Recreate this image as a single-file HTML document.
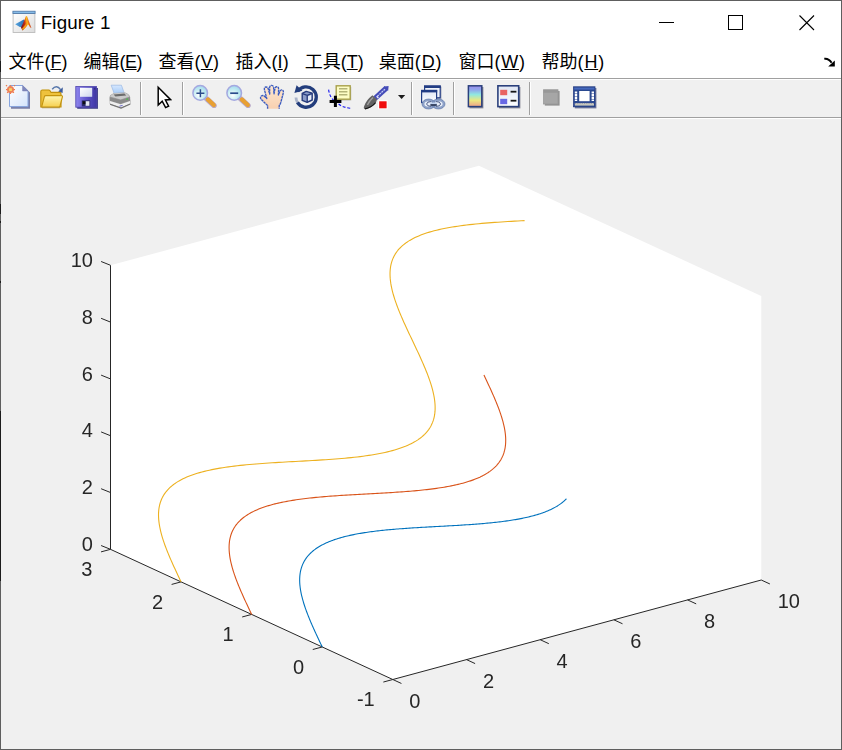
<!DOCTYPE html>
<html><head><meta charset="utf-8"><title>Figure 1</title>
<style>
html,body{margin:0;padding:0;}
body{width:842px;height:750px;overflow:hidden;background:#f0f0f0;position:relative;font-family:"Liberation Sans","Noto Sans CJK SC",sans-serif;}
#win{position:absolute;left:0;top:0;width:842px;height:750px;background:#f0f0f0;}
#bd{position:absolute;left:0;top:0;width:840px;height:748px;border:1px solid #5e5e5e;pointer-events:none;}
#title{position:absolute;left:0;top:0;width:842px;height:44px;background:#fff;}
#title .txt{position:absolute;left:40.8px;top:11.7px;font-size:18.8px;letter-spacing:0.1px;line-height:22px;color:#000;white-space:nowrap;}
#menu{position:absolute;left:0;top:44px;width:842px;height:34px;background:#fff;border-bottom:1px solid #a0a0a0;}
.mi{position:absolute;top:5.6px;font-size:18px;line-height:24px;color:#000;white-space:nowrap;}
#tb{position:absolute;left:0;top:79px;width:842px;height:37px;background:#f0f0f0;border-top:1px solid #fff;border-bottom:1px solid #a0a0a0;}
.lb{position:absolute;left:0;width:1px;background:#1c1c1c;}
#tbl{position:absolute;left:0;top:118px;width:842px;height:1px;background:#fff;}
svg{position:absolute;left:0;top:0;will-change:transform;}
</style></head><body>
<div id="win">
<div id="title"><span class="txt">Figure 1</span></div>
<div id="menu"><span class="mi" style="left:8.4px">文件<span style="letter-spacing:0.0px">(<u>F</u>)</span></span><span class="mi" style="left:83.6px">编辑<span style="letter-spacing:-0.5px">(<u>E</u>)</span></span><span class="mi" style="left:158.5px">查看<span style="letter-spacing:0.3px">(<u>V</u>)</span></span><span class="mi" style="left:235.5px">插入<span style="letter-spacing:0.1px">(<u>I</u>)</span></span><span class="mi" style="left:304.7px">工具<span style="letter-spacing:0.0px">(<u>T</u>)</span></span><span class="mi" style="left:378.8px">桌面<span style="letter-spacing:0.9px">(<u>D</u>)</span></span><span class="mi" style="left:458.5px">窗口<span style="letter-spacing:0.7px">(<u>W</u>)</span></span><span class="mi" style="left:541.6px">帮助<span style="letter-spacing:0.8px">(<u>H</u>)</span></span></div>
<div id="tb"></div><div id="tbl"></div>
</div>
<svg width="842" height="750" viewBox="0 0 842 750">
<polygon points="110.50,265.29 478.95,165.79 761.25,295.95 761.25,580.00 392.80,679.50 110.50,549.34" fill="#fff"/>
<g stroke="#262626" stroke-width="1" fill="none" stroke-linecap="butt">
<line x1="110.50" y1="549.34" x2="110.50" y2="265.29" />
<line x1="110.50" y1="549.34" x2="392.80" y2="679.50" />
<line x1="392.80" y1="679.50" x2="761.25" y2="580.00" />
<line x1="110.50" y1="549.34" x2="101.10" y2="545.54" />
<line x1="110.50" y1="492.53" x2="101.10" y2="488.73" />
<line x1="110.50" y1="435.72" x2="101.10" y2="431.92" />
<line x1="110.50" y1="378.91" x2="101.10" y2="375.11" />
<line x1="110.50" y1="322.10" x2="101.10" y2="318.30" />
<line x1="110.50" y1="265.29" x2="101.10" y2="261.49" />
<line x1="392.80" y1="679.50" x2="383.34" y2="682.05" />
<line x1="322.23" y1="646.96" x2="312.76" y2="649.51" />
<line x1="251.65" y1="614.42" x2="242.19" y2="616.97" />
<line x1="181.07" y1="581.88" x2="171.61" y2="584.43" />
<line x1="110.50" y1="549.34" x2="101.04" y2="551.89" />
<line x1="392.80" y1="679.50" x2="401.43" y2="683.48" />
<line x1="466.49" y1="659.60" x2="475.12" y2="663.58" />
<line x1="540.18" y1="639.70" x2="548.81" y2="643.68" />
<line x1="613.87" y1="619.80" x2="622.50" y2="623.78" />
<line x1="687.56" y1="599.90" x2="696.19" y2="603.88" />
<line x1="761.25" y1="580.00" x2="769.88" y2="583.98" />
</g>
<g font-family="'Liberation Sans',Arial,sans-serif" font-size="20" fill="#262626"><text x="92.90" y="551.09" text-anchor="end">0</text><text x="92.90" y="494.28" text-anchor="end">2</text><text x="92.90" y="437.47" text-anchor="end">4</text><text x="92.90" y="380.66" text-anchor="end">6</text><text x="92.90" y="323.85" text-anchor="end">8</text><text x="92.90" y="267.04" text-anchor="end">10</text><text x="374.74" y="706.15" text-anchor="end">-1</text><text x="304.16" y="673.61" text-anchor="end">0</text><text x="233.59" y="641.07" text-anchor="end">1</text><text x="163.01" y="608.53" text-anchor="end">2</text><text x="92.44" y="575.99" text-anchor="end">3</text><text x="409.23" y="707.98">0</text><text x="482.92" y="688.08">2</text><text x="556.61" y="668.18">4</text><text x="630.30" y="648.28">6</text><text x="703.99" y="628.38">8</text><text x="777.68" y="608.48">10</text></g>
<polyline points="322.23,646.96 321.70,645.85 321.17,644.73 320.64,643.62 320.11,642.51 319.58,641.39 319.06,640.28 318.53,639.17 318.01,638.06 317.49,636.95 316.97,635.84 316.46,634.74 315.95,633.63 315.44,632.53 314.93,631.43 314.43,630.33 313.93,629.23 313.44,628.13 312.95,627.04 312.47,625.94 311.99,624.86 311.52,623.77 311.05,622.68 310.59,621.60 310.13,620.52 309.69,619.45 309.24,618.37 308.81,617.30 308.38,616.24 307.96,615.17 307.55,614.11 307.14,613.06 306.75,612.00 306.36,610.96 305.98,609.91 305.61,608.87 305.24,607.83 304.89,606.80 304.55,605.78 304.22,604.75 303.89,603.73 303.58,602.72 303.28,601.71 302.99,600.71 302.70,599.71 302.43,598.72 302.18,597.73 301.93,596.74 301.69,595.77 301.47,594.79 301.26,593.83 301.06,592.87 300.87,591.91 300.70,590.96 300.54,590.02 300.39,589.08 300.26,588.15 300.14,587.22 300.03,586.30 299.93,585.39 299.85,584.49 299.79,583.59 299.74,582.69 299.70,581.81 299.68,580.93 299.67,580.05 299.68,579.19 299.70,578.33 299.74,577.48 299.79,576.63 299.86,575.79 299.94,574.96 300.04,574.14 300.15,573.32 300.28,572.51 300.43,571.71 300.59,570.92 300.77,570.13 300.97,569.35 301.18,568.58 301.40,567.81 301.65,567.06 301.91,566.31 302.19,565.57 302.48,564.83 302.79,564.11 303.12,563.39 303.47,562.68 303.83,561.98 304.21,561.28 304.61,560.60 305.02,559.92 305.45,559.25 305.90,558.59 306.37,557.93 306.85,557.28 307.35,556.65 307.87,556.02 308.40,555.39 308.96,554.78 309.53,554.17 310.11,553.57 310.72,552.98 311.34,552.40 311.98,551.83 312.64,551.26 313.31,550.70 314.00,550.15 314.71,549.61 315.44,549.07 316.18,548.55 316.94,548.03 317.72,547.52 318.52,547.02 319.33,546.52 320.16,546.03 321.00,545.55 321.87,545.08 322.75,544.62 323.64,544.16 324.56,543.72 325.48,543.27 326.43,542.84 327.39,542.42 328.37,542.00 329.37,541.59 330.38,541.18 331.41,540.79 332.45,540.40 333.51,540.02 334.58,539.64 335.67,539.28 336.78,538.92 337.90,538.57 339.03,538.22 340.18,537.88 341.35,537.55 342.53,537.22 343.72,536.90 344.93,536.59 346.16,536.29 347.39,535.99 348.64,535.70 349.91,535.41 351.19,535.13 352.48,534.86 353.78,534.59 355.10,534.33 356.43,534.07 357.78,533.82 359.13,533.58 360.50,533.34 361.88,533.11 363.28,532.88 364.68,532.66 366.10,532.44 367.53,532.23 368.96,532.03 370.41,531.82 371.87,531.63 373.34,531.44 374.82,531.25 376.32,531.07 377.82,530.89 379.33,530.72 380.85,530.55 382.37,530.38 383.91,530.22 385.46,530.07 387.01,529.91 388.57,529.77 390.14,529.62 391.72,529.48 393.31,529.34 394.90,529.21 396.50,529.07 398.11,528.94 399.72,528.82 401.34,528.70 402.96,528.58 404.59,528.46 406.23,528.34 407.87,528.23 409.52,528.12 411.17,528.01 412.82,527.91 414.48,527.80 416.14,527.70 417.81,527.60 419.48,527.50 421.15,527.40 422.82,527.30 424.50,527.21 426.18,527.11 427.86,527.02 429.55,526.92 431.23,526.83 432.92,526.74 434.60,526.65 436.29,526.56 437.98,526.46 439.66,526.37 441.35,526.28 443.04,526.19 444.72,526.10 446.41,526.00 448.09,525.91 449.77,525.82 451.45,525.72 453.13,525.63 454.80,525.53 456.48,525.43 458.15,525.33 459.81,525.23 461.48,525.13 463.13,525.02 464.79,524.92 466.44,524.81 468.08,524.70 469.73,524.59 471.36,524.47 472.99,524.35 474.62,524.23 476.23,524.11 477.85,523.98 479.45,523.85 481.05,523.72 482.65,523.59 484.23,523.45 485.81,523.31 487.38,523.16 488.94,523.01 490.50,522.86 492.04,522.70 493.58,522.54 495.11,522.38 496.63,522.21 498.14,522.04 499.64,521.86 501.13,521.68 502.61,521.49 504.08,521.30 505.54,521.10 506.99,520.90 508.43,520.70 509.86,520.49 511.27,520.27 512.68,520.05 514.07,519.82 515.45,519.59 516.82,519.35 518.18,519.11 519.52,518.86 520.85,518.60 522.17,518.34 523.47,518.07 524.77,517.80 526.05,517.52 527.31,517.23 528.56,516.94 529.80,516.64 531.02,516.34 532.23,516.02 533.43,515.71 534.61,515.38 535.77,515.05 536.92,514.71 538.06,514.36 539.18,514.01 540.28,513.65 541.37,513.28 542.45,512.91 543.51,512.53 544.55,512.14 545.58,511.74 546.59,511.34 547.58,510.93 548.56,510.51 549.52,510.09 550.47,509.65 551.40,509.21 552.31,508.76 553.21,508.31 554.09,507.85 554.95,507.37 555.80,506.89 556.63,506.41 557.44,505.91 558.23,505.41 559.01,504.90 559.77,504.38 560.52,503.85 561.24,503.32 561.95,502.78 562.64,502.23 563.32,501.67 563.97,501.10 564.61,500.53 565.24,499.95 565.84,499.35 566.43,498.76" fill="none" stroke="#0072BD" stroke-width="1.1" stroke-linejoin="round"/>
<polyline points="251.65,614.42 250.95,612.94 250.24,611.46 249.54,609.98 248.84,608.51 248.14,607.03 247.45,605.55 246.76,604.08 246.07,602.61 245.39,601.14 244.72,599.68 244.05,598.21 243.39,596.75 242.73,595.30 242.09,593.84 241.45,592.40 240.82,590.95 240.21,589.51 239.60,588.08 239.00,586.65 238.42,585.22 237.85,583.81 237.29,582.39 236.75,580.99 236.22,579.59 235.70,578.20 235.20,576.81 234.72,575.43 234.25,574.06 233.80,572.70 233.36,571.34 232.95,570.00 232.55,568.66 232.17,567.33 231.82,566.01 231.48,564.70 231.16,563.40 230.86,562.11 230.59,560.83 230.33,559.55 230.10,558.29 229.89,557.04 229.71,555.80 229.55,554.57 229.41,553.35 229.30,552.15 229.21,550.95 229.14,549.77 229.11,548.59 229.09,547.43 229.11,546.29 229.15,545.15 229.22,544.03 229.31,542.91 229.43,541.82 229.58,540.73 229.76,539.66 229.97,538.60 230.20,537.55 230.47,536.52 230.76,535.50 231.08,534.49 231.43,533.50 231.81,532.52 232.23,531.56 232.67,530.60 233.14,529.67 233.64,528.74 234.17,527.83 234.73,526.94 235.32,526.05 235.94,525.19 236.60,524.33 237.28,523.49 237.99,522.67 238.74,521.85 239.51,521.06 240.32,520.27 241.16,519.51 242.03,518.75 242.92,518.01 243.85,517.28 244.81,516.57 245.80,515.87 246.82,515.19 247.87,514.52 248.95,513.86 250.06,513.22 251.20,512.59 252.37,511.97 253.57,511.37 254.80,510.78 256.06,510.21 257.35,509.65 258.66,509.10 260.01,508.56 261.38,508.04 262.78,507.53 264.21,507.04 265.66,506.55 267.14,506.08 268.65,505.62 270.19,505.17 271.75,504.74 273.33,504.32 274.95,503.90 276.58,503.50 278.25,503.12 279.93,502.74 281.64,502.37 283.37,502.02 285.13,501.67 286.91,501.34 288.71,501.01 290.53,500.70 292.38,500.39 294.24,500.10 296.13,499.81 298.03,499.54 299.96,499.27 301.90,499.01 303.86,498.76 305.84,498.52 307.84,498.28 309.85,498.06 311.88,497.84 313.92,497.62 315.98,497.42 318.06,497.22 320.14,497.03 322.25,496.84 324.36,496.66 326.49,496.49 328.63,496.32 330.77,496.16 332.93,496.00 335.10,495.84 337.28,495.69 339.47,495.54 341.66,495.40 343.87,495.26 346.08,495.13 348.29,494.99 350.51,494.86 352.74,494.73 354.97,494.61 357.20,494.48 359.44,494.36 361.68,494.24 363.92,494.11 366.16,493.99 368.40,493.87 370.64,493.75 372.88,493.63 375.12,493.50 377.35,493.38 379.59,493.26 381.82,493.13 384.04,493.00 386.27,492.87 388.48,492.74 390.69,492.60 392.89,492.46 395.09,492.32 397.28,492.17 399.46,492.02 401.63,491.87 403.79,491.71 405.94,491.55 408.08,491.38 410.21,491.21 412.32,491.03 414.43,490.84 416.52,490.65 418.59,490.45 420.65,490.25 422.70,490.04 424.73,489.82 426.75,489.59 428.74,489.36 430.72,489.12 432.69,488.87 434.63,488.61 436.56,488.34 438.47,488.07 440.35,487.78 442.22,487.49 444.07,487.18 445.89,486.87 447.70,486.55 449.48,486.21 451.24,485.87 452.97,485.52 454.68,485.15 456.37,484.78 458.04,484.39 459.68,483.99 461.29,483.58 462.88,483.16 464.45,482.72 465.98,482.28 467.50,481.82 468.98,481.35 470.44,480.87 471.87,480.37 473.27,479.86 474.65,479.34 475.99,478.81 477.31,478.26 478.60,477.70 479.86,477.13 481.09,476.54 482.30,475.94 483.47,475.33 484.61,474.70 485.73,474.06 486.81,473.40 487.87,472.73 488.89,472.05 489.88,471.36 490.85,470.64 491.78,469.92 492.68,469.18 493.55,468.43 494.39,467.66 495.20,466.88 495.98,466.08 496.73,465.27 497.45,464.45 498.13,463.61 498.79,462.76 499.42,461.89 500.01,461.01 500.58,460.12 501.11,459.21 501.61,458.29 502.09,457.35 502.53,456.40 502.94,455.44 503.33,454.46 503.68,453.47 504.01,452.46 504.30,451.44 504.57,450.41 504.81,449.37 505.02,448.31 505.20,447.24 505.35,446.15 505.48,445.06 505.58,443.95 505.65,442.82 505.69,441.69 505.71,440.54 505.70,439.38 505.67,438.21 505.61,437.03 505.52,435.84 505.41,434.63 505.27,433.41 505.11,432.18 504.93,430.95 504.73,429.70 504.50,428.44 504.25,427.17 503.97,425.88 503.68,424.59 503.36,423.29 503.03,421.98 502.67,420.66 502.29,419.34 501.90,418.00 501.49,416.65 501.05,415.30 500.61,413.94 500.14,412.57 499.66,411.19 499.16,409.81 498.65,408.42 498.12,407.02 497.57,405.61 497.02,404.20 496.45,402.78 495.86,401.36 495.27,399.93 494.67,398.50 494.05,397.06 493.42,395.61 492.79,394.17 492.14,392.71 491.49,391.26 490.83,389.80 490.16,388.34 489.49,386.87 488.81,385.40 488.12,383.93 487.43,382.46 486.74,380.98 486.04,379.51 485.34,378.03 484.64,376.55 483.94,375.07" fill="none" stroke="#D95319" stroke-width="1.1" stroke-linejoin="round"/>
<polyline points="181.07,581.88 180.02,579.66 178.97,577.44 177.92,575.23 176.88,573.01 175.84,570.81 174.82,568.60 173.81,566.40 172.81,564.21 171.84,562.03 170.88,559.86 169.94,557.69 169.02,555.54 168.14,553.40 167.27,551.27 166.44,549.15 165.64,547.05 164.87,544.96 164.14,542.89 163.45,540.84 162.79,538.80 162.17,536.79 161.60,534.79 161.07,532.81 160.58,530.86 160.15,528.92 159.76,527.01 159.42,525.13 159.13,523.26 158.90,521.42 158.72,519.61 158.60,517.82 158.53,516.05 158.52,514.32 158.57,512.61 158.69,510.93 158.86,509.28 159.10,507.65 159.39,506.06 159.76,504.49 160.19,502.96 160.68,501.45 161.24,499.98 161.87,498.54 162.56,497.13 163.32,495.74 164.15,494.40 165.05,493.08 166.02,491.79 167.06,490.54 168.16,489.31 169.34,488.12 170.58,486.97 171.90,485.84 173.28,484.74 174.73,483.68 176.25,482.65 177.83,481.65 179.49,480.68 181.21,479.74 183.00,478.83 184.85,477.96 186.77,477.11 188.76,476.29 190.80,475.50 192.91,474.74 195.09,474.01 197.32,473.31 199.61,472.63 201.96,471.99 204.37,471.36 206.84,470.77 209.36,470.20 211.93,469.65 214.56,469.13 217.23,468.63 219.96,468.16 222.73,467.70 225.55,467.27 228.42,466.86 231.32,466.47 234.27,466.10 237.26,465.74 240.29,465.40 243.35,465.08 246.44,464.78 249.57,464.49 252.73,464.21 255.91,463.95 259.12,463.70 262.36,463.46 265.62,463.23 268.89,463.00 272.19,462.79 275.50,462.59 278.83,462.39 282.16,462.19 285.51,462.00 288.86,461.82 292.22,461.63 295.58,461.45 298.94,461.27 302.30,461.09 305.66,460.90 309.01,460.72 312.36,460.53 315.69,460.33 319.01,460.13 322.32,459.92 325.61,459.71 328.88,459.48 332.14,459.25 335.37,459.01 338.57,458.75 341.75,458.49 344.90,458.21 348.02,457.91 351.10,457.60 354.16,457.28 357.17,456.94 360.15,456.58 363.09,456.20 365.98,455.80 368.84,455.39 371.65,454.95 374.41,454.49 377.12,454.01 379.78,453.50 382.40,452.98 384.96,452.42 387.46,451.85 389.91,451.25 392.31,450.62 394.64,449.96 396.92,449.28 399.14,448.57 401.29,447.83 403.39,447.06 405.42,446.27 407.39,445.44 409.29,444.59 411.12,443.70 412.90,442.79 414.60,441.84 416.24,440.86 417.81,439.86 419.31,438.82 420.74,437.74 422.11,436.64 423.40,435.51 424.63,434.34 425.78,433.14 426.87,431.91 427.89,430.65 428.84,429.35 429.72,428.03 430.53,426.67 431.28,425.28 431.96,423.86 432.57,422.41 433.11,420.93 433.59,419.41 434.00,417.87 434.34,416.30 434.63,414.70 434.85,413.07 435.00,411.41 435.10,409.72 435.13,408.00 435.11,406.26 435.03,404.49 434.89,402.69 434.70,400.87 434.45,399.03 434.15,397.16 433.80,395.26 433.40,393.34 432.95,391.40 432.45,389.44 431.91,387.46 431.32,385.46 430.70,383.44 430.03,381.40 429.33,379.34 428.58,377.27 427.81,375.18 427.00,373.07 426.16,370.95 425.29,368.82 424.39,366.67 423.47,364.52 422.53,362.35 421.57,360.17 420.58,357.99 419.59,355.80 418.57,353.60 417.55,351.39 416.51,349.18 415.47,346.97 414.41,344.75 413.36,342.53 412.31,340.31 411.25,338.09 410.20,335.88 409.15,333.66 408.11,331.45 407.08,329.24 406.06,327.04 405.05,324.84 404.06,322.65 403.09,320.47 402.14,318.30 401.20,316.14 400.30,313.99 399.41,311.85 398.56,309.72 397.74,307.61 396.94,305.51 396.19,303.43 395.46,301.37 394.78,299.32 394.13,297.29 393.52,295.28 392.96,293.28 392.44,291.31 391.97,289.36 391.55,287.44 391.17,285.53 390.84,283.65 390.57,281.79 390.35,279.96 390.19,278.15 390.08,276.37 390.03,274.61 390.03,272.88 390.10,271.18 390.23,269.51 390.42,267.86 390.67,266.25 390.99,264.66 391.37,263.10 391.81,261.57 392.32,260.08 392.90,258.61 393.54,257.18 394.26,255.77 395.04,254.40 395.88,253.06 396.80,251.75 397.79,250.47 398.84,249.23 399.97,248.01 401.16,246.83 402.42,245.68 403.75,244.56 405.15,243.47 406.62,242.42 408.16,241.39 409.76,240.40 411.43,239.44 413.17,238.51 414.98,237.61 416.85,236.74 418.78,235.90 420.78,235.09 422.85,234.31 424.97,233.56 427.16,232.84 429.41,232.14 431.72,231.47 434.09,230.83 436.51,230.22 438.99,229.63 441.52,229.06 444.11,228.52 446.75,228.01 449.44,227.52 452.18,227.05 454.96,226.60 457.79,226.17 460.67,225.77 463.59,225.38 466.55,225.01 469.55,224.66 472.58,224.33 475.65,224.01 478.75,223.71 481.89,223.42 485.05,223.15 488.25,222.89 491.46,222.64 494.71,222.40 497.97,222.18 501.25,221.96 504.55,221.75 507.87,221.54 511.19,221.35 514.53,221.15 517.88,220.96 521.24,220.78 524.60,220.60" fill="none" stroke="#EDB120" stroke-width="1.1" stroke-linejoin="round"/>
<defs>
<filter id="bl" x="-10%" y="-10%" width="120%" height="120%"><feGaussianBlur stdDeviation="0.5"/></filter>
<filter id="bl2" x="-10%" y="-10%" width="120%" height="120%"><feGaussianBlur stdDeviation="0.6"/></filter>
<linearGradient id="gpage" x1="0" y1="0" x2="1" y2="1"><stop offset="0" stop-color="#ffffff"/><stop offset="1" stop-color="#d4e4fb"/></linearGradient>
<linearGradient id="gfold" x1="0" y1="0" x2="0" y2="1"><stop offset="0" stop-color="#fff6b0"/><stop offset="1" stop-color="#f6d050"/></linearGradient>
<linearGradient id="gsave" x1="0" y1="0" x2="1" y2="0"><stop offset="0" stop-color="#8f86ee"/><stop offset="0.5" stop-color="#5f55cc"/><stop offset="1" stop-color="#4038a4"/></linearGradient>
<linearGradient id="glabel" x1="0" y1="0" x2="1" y2="1"><stop offset="0" stop-color="#ffffff"/><stop offset="1" stop-color="#cdd6ee"/></linearGradient>
<linearGradient id="gpaper" x1="0" y1="0" x2="0" y2="1"><stop offset="0" stop-color="#d6e8ff"/><stop offset="1" stop-color="#9cc4f4"/></linearGradient>
<radialGradient id="glens" cx="0.4" cy="0.65" r="0.75"><stop offset="0" stop-color="#ffffff"/><stop offset="0.5" stop-color="#c4ecf2"/><stop offset="1" stop-color="#98d4ea"/></radialGradient>
<linearGradient id="gcb" x1="0" y1="0" x2="0" y2="1"><stop offset="0" stop-color="#9a8cec"/><stop offset="0.2" stop-color="#90a8ec"/><stop offset="0.42" stop-color="#90e8e0"/><stop offset="0.7" stop-color="#ece880"/><stop offset="1" stop-color="#f0a088"/></linearGradient>
<linearGradient id="gleg" x1="0" y1="0" x2="0" y2="1"><stop offset="0" stop-color="#dfe6f4"/><stop offset="1" stop-color="#ffffff"/></linearGradient>
<linearGradient id="gskin" x1="0" y1="0" x2="0" y2="1"><stop offset="0" stop-color="#ffe8d0"/><stop offset="1" stop-color="#f8d0b0"/></linearGradient>
<linearGradient id="gicon" x1="0" y1="0" x2="1" y2="1"><stop offset="0" stop-color="#ffffff"/><stop offset="1" stop-color="#dcdcdc"/></linearGradient>
<linearGradient id="gmem" x1="0" y1="0.2" x2="1" y2="0"><stop offset="0" stop-color="#8c1414"/><stop offset="0.28" stop-color="#c03018"/><stop offset="0.42" stop-color="#f07c14"/><stop offset="0.52" stop-color="#f8c020"/><stop offset="0.62" stop-color="#f08018"/><stop offset="0.8" stop-color="#d04818"/><stop offset="1" stop-color="#a82018"/></linearGradient>
<linearGradient id="gmemb" x1="0" y1="0" x2="1" y2="0"><stop offset="0" stop-color="#58a8e0"/><stop offset="1" stop-color="#2868b0"/></linearGradient>
</defs>

<!-- window icon -->
<g filter="url(#bl)">
<rect x="13.1" y="13.5" width="21.8" height="19" fill="url(#gicon)" stroke="#bcbcbc" stroke-width="0.9"/>
<rect x="12.9" y="11.2" width="22.2" height="2.3" fill="#86bce8" stroke="#4a74a4" stroke-width="0.8"/>
<polygon points="15.2,24.3 23.8,19.4 25.2,21.4 22.2,27.8 19,26.5" fill="url(#gmemb)"/>
<polygon points="21,27.4 23.4,22.4 24.8,19 26,16 27,16.2 28.6,20.6 31.4,27.9 30,27.2 28.3,24.4 26.2,26.8 22.6,30.5 21.6,28.8" fill="url(#gmem)"/>
<polygon points="22,28.6 24.2,26 26.4,23.6 26.3,26.7 22.7,30.4" fill="#f8a418" opacity="0.9"/>
</g>

<!-- new -->
<g filter="url(#bl)">
<path d="M11,87 H24.4 L30,92.6 V108.7 H11 Z" fill="#787ea8"/>
<path d="M9.5,85.5 H22.6 L28,90.9 V106.6 H9.5 Z" fill="url(#gpage)" stroke="#86a4de" stroke-width="1"/>
<path d="M22.6,85.5 V90.9 H28 Z" fill="#8088bc" stroke="#7880b4" stroke-width="0.6"/>
<g stroke="#ee7848" stroke-width="1.2" stroke-dasharray="1.4 3.4"><line x1="6" y1="85.2" x2="15" y2="94"/><line x1="15" y1="85.2" x2="6" y2="94"/></g>
<g stroke="#ee7848" stroke-width="1.2"><line x1="10.5" y1="85.2" x2="10.5" y2="94"/><line x1="6" y1="89.6" x2="15" y2="89.6"/></g>
<circle cx="10.5" cy="89.6" r="3.5" fill="#ee8058"/>
<rect x="9.1" y="88.2" width="2.8" height="2.8" fill="#f6d468"/>
</g>

<!-- open -->
<g filter="url(#bl)">
<path d="M52.2,89.2 Q56.5,84.2 60.6,89.6" fill="none" stroke="#5878ac" stroke-width="1.5"/>
<polygon points="62.8,87.2 62.6,93 58.2,91.4" fill="#3c5c9c"/>
<path d="M40.8,107 V91.6 Q40.8,90 42.4,90 H48.6 Q49.6,90 50.2,91 L51,92.4 H59.4 Q61,92.4 61,94 V107 Z" fill="#eec23c" stroke="#c0900c" stroke-width="1.1"/>
<path d="M41.6,107 L44.4,96.6 Q44.7,95.6 45.8,95.6 H61.4 Q62.8,95.6 62.4,97 L60,106 Q59.7,107 58.6,107 Z" fill="url(#gfold)" stroke="#c4940f" stroke-width="1.1"/>
<line x1="42" y1="107.8" x2="60" y2="107.8" stroke="#9c7c20" stroke-width="0.8" opacity="0.7"/>
</g>

<!-- save -->
<g filter="url(#bl)">
<rect x="77.2" y="88" width="20.8" height="20.8" fill="#46468c"/>
<rect x="75.8" y="86.6" width="20.6" height="20.6" fill="url(#gsave)" stroke="#4a40ac" stroke-width="0.8"/>
<rect x="80" y="87.8" width="12.2" height="9" fill="url(#glabel)"/>
<rect x="81.8" y="100.4" width="8.4" height="6" fill="#2c2c6c"/>
<rect x="85.6" y="101.2" width="3.8" height="4.6" fill="#e4e8f4"/>
<rect x="82.6" y="101.2" width="2.8" height="3" fill="#101018"/>
<rect x="94" y="88.2" width="1.4" height="1.4" fill="#30287c"/>
</g>

<!-- print -->
<g filter="url(#bl)">
<path d="M110.4,98.8 L120.8,103 L130.4,99.4 L130.6,104.6 L121.2,109 L110.4,105 Z" fill="#808080" opacity="0.55"/>
<polygon points="111.2,85.2 121.4,85.2 124.8,94.6 114.8,95.4" fill="url(#gpaper)" stroke="#9ab8e4" stroke-width="0.7"/>
<path d="M109.6,97 Q109.6,95.6 111.4,94.6 L114,93 L125,92.4 Q127,92.8 128.6,94.4 Q130.2,95.8 130.2,97.2 L130.2,103.6 L121,108.2 L109.8,104 Z" fill="#9c9c9c"/>
<path d="M110,96.6 Q110.4,95.4 112,94.4 L114.2,93.2 L125,92.8 Q127.4,93.6 129.6,96.6 L120.6,99.4 Z" fill="#cacaca"/>
<path d="M113.6,94.4 L124.4,93.6 L126.2,95.4 L115.4,96.4 Z" fill="#6c6c6c"/>
<polygon points="109.8,97.2 120.6,100 130,97.2 130,100.8 120.6,103.8 109.8,100.8" fill="#8a8a8a"/>
<polygon points="110,101 120.6,104.2 130,101 130.2,103.4 121,107.4 110,103.6" fill="#efefef"/>
<polygon points="110,103.8 121,107.6 130.2,103.6 130.2,104.4 121,108.6 110,104.8" fill="#6c6c6c"/>
<rect x="126.4" y="98.4" width="1.5" height="1.5" fill="#48c048"/>
<line x1="119.4" y1="106.2" x2="122.6" y2="105.4" stroke="#6868c8" stroke-width="1"/>
</g>

<!-- separators -->
<g>
<rect x="140" y="82" width="1" height="33" fill="#a0a0a0"/><rect x="141" y="82" width="1" height="33" fill="#ffffff"/>
<rect x="182" y="82" width="1" height="33" fill="#a0a0a0"/><rect x="183" y="82" width="1" height="33" fill="#ffffff"/>
<rect x="411" y="82" width="1" height="33" fill="#a0a0a0"/><rect x="412" y="82" width="1" height="33" fill="#ffffff"/>
<rect x="453" y="82" width="1" height="33" fill="#a0a0a0"/><rect x="454" y="82" width="1" height="33" fill="#ffffff"/>
<rect x="529" y="82" width="1" height="33" fill="#a0a0a0"/><rect x="530" y="82" width="1" height="33" fill="#ffffff"/>
</g>

<!-- pointer -->
<g filter="url(#bl)">
<path d="M158.2,87.2 V105 L162.2,101.2 L165.6,107.6 L168.6,106.2 L165.4,100 L170.6,99.6 Z" fill="#ffffff" stroke="#000000" stroke-width="1.5" stroke-linejoin="miter"/>
</g>

<!-- zoom in -->
<g filter="url(#bl)">
<line x1="206.6" y1="98.8" x2="214" y2="105.6" stroke="#b8a8c8" stroke-width="5.4" stroke-linecap="round"/>
<line x1="207.8" y1="99.4" x2="213.8" y2="105" stroke="#e8a030" stroke-width="4.2" stroke-linecap="round"/>
<circle cx="200.2" cy="92.9" r="7.3" fill="url(#glens)" stroke="#a4a8e0" stroke-width="1.5"/>
<path d="M196.4,93.2 H204.4 M200.4,89.2 V97.2" stroke="#2c4c8c" stroke-width="1.5" fill="none"/>
</g>
<!-- zoom out -->
<g filter="url(#bl)">
<line x1="240.6" y1="98.8" x2="248" y2="105.6" stroke="#b8a8c8" stroke-width="5.4" stroke-linecap="round"/>
<line x1="241.8" y1="99.4" x2="247.8" y2="105" stroke="#e8a030" stroke-width="4.2" stroke-linecap="round"/>
<circle cx="234.2" cy="92.9" r="7.3" fill="url(#glens)" stroke="#a4a8e0" stroke-width="1.5"/>
<path d="M230.2,93.2 H238.2" stroke="#2c4c8c" stroke-width="1.7" fill="none"/>
</g>

<!-- pan hand -->
<g filter="url(#bl)">
<path d="M267.6,108.8 V105.6 L261.2,99.4 Q259.6,97.4 261.4,96 Q263,94.8 264.8,96.6 L266.8,98.6 L264.4,89.6 Q264,87.4 265.8,87 Q267.6,86.8 268.2,88.8 L269.7,94 L269.6,87.4 Q269.8,85.4 271.6,85.4 Q273.4,85.4 273.6,87.4 L274,93.8 L275,88.4 Q275.4,86.4 277.2,86.8 Q278.8,87.2 278.6,89.2 L278.4,95 L280,91 Q280.8,89.4 282.4,90 Q283.8,90.8 283.4,92.6 L281.2,101 Q280.6,104 279.2,105.6 V108.8" fill="url(#gskin)" stroke="#3c5cc0" stroke-width="1.35" stroke-dasharray="2.6 0.5" stroke-linejoin="round"/>
</g>

<!-- rotate 3d -->
<g filter="url(#bl)">
<path d="M297.6,91.4 A10.2,10.2 0 1 1 297.4,102.4" fill="none" stroke="#243c7c" stroke-width="3.3"/>
<path d="M297.4,102.4 A10.2,10.2 0 0 1 296,97.4" fill="none" stroke="#7080a8" stroke-width="2.8" opacity="0.55"/>
<polygon points="294.4,93 296.6,85.2 302.4,90.8" fill="#243c7c"/>
<polygon points="302.2,93.4 306.2,91.4 312.2,93.2 312.2,100 307.2,102.4 302.2,100.4" fill="#8c9cc8" stroke="#283c7c" stroke-width="1.4" stroke-linejoin="round"/>
<path d="M302.4,93.6 L307.2,95.4 L312,93.4 M307.2,95.4 V102.2" fill="none" stroke="#283c7c" stroke-width="1.3"/>
<polygon points="308,96.2 311.2,95 311.2,99.6 308,100.8" fill="#e6ecf8"/>
</g>

<!-- data cursor -->
<g filter="url(#bl)">
<rect x="337.2" y="86.8" width="14" height="13.6" fill="#8c8c78" opacity="0.6"/>
<rect x="336.2" y="85.8" width="14" height="13.4" fill="#fdfdc4" stroke="#a8a04c" stroke-width="1.4"/>
<path d="M339,88.8 H347.4 M339,91.8 H347.4 M339,94.8 H347.4" stroke="#b4b478" stroke-width="1.4"/>
<path d="M328.6,89.6 Q329.6,97 334,100.6" fill="none" stroke="#1818f0" stroke-width="1.1" stroke-dasharray="3 1.8"/>
<path d="M338.6,104 Q343,107.6 350.2,108.2" fill="none" stroke="#1818f0" stroke-width="1.1" stroke-dasharray="3 1.8"/>
<path d="M329.6,101.4 H341.4 M335.4,95.8 V107" stroke="#000000" stroke-width="3" fill="none"/>
</g>

<!-- brush -->
<g filter="url(#bl)">
<rect x="378" y="100.2" width="9.6" height="9" fill="#ffffff"/>
<rect x="379.2" y="101.3" width="7.4" height="7" fill="#f00808"/>
<line x1="386.4" y1="88" x2="375" y2="98.4" stroke="#444cb8" stroke-width="5.2" stroke-linecap="butt"/>
<polygon points="384,86.4 388.6,86 388.2,90.8" fill="#444cb8"/>
<line x1="385" y1="89.2" x2="377" y2="96.6" stroke="#c0c8f4" stroke-width="1.3" stroke-dasharray="2 0.8"/>
<line x1="376.6" y1="96.2" x2="378.4" y2="98" stroke="#e8e8f8" stroke-width="1.4"/>
<path d="M377,99.6 Q376,106 367,109 Q362.6,109.8 364.2,106 Q366.2,100 372.4,95.2 Z" fill="#626262"/>
<path d="M373,97.4 Q369.4,100.6 367.4,105" stroke="#a0a0a0" stroke-width="1.4" fill="none"/>
<path d="M365,108.8 Q371,107.8 375.6,102.6" stroke="#181818" stroke-width="1.2" fill="none"/>
</g>
<polygon points="398,95 405.2,95 401.6,99" fill="#1a1a1a" filter="url(#bl)"/>

<!-- link -->
<g filter="url(#bl)">
<rect x="425.6" y="86.6" width="16" height="12.6" fill="#8890a8" opacity="0.6"/>
<rect x="424.6" y="86.2" width="15.6" height="11.6" fill="#f0f4fb" stroke="#243c84" stroke-width="1.2"/>
<rect x="424" y="85.4" width="16.8" height="2.6" fill="#243c84"/>
<rect x="421.6" y="90.6" width="15" height="12" fill="url(#gleg)" stroke="#243c84" stroke-width="1.2"/>
<rect x="421" y="89.8" width="16.2" height="2.6" fill="#243c84"/>
<ellipse cx="428.6" cy="104" rx="5.4" ry="3.9" fill="#e8eef8" stroke="#8ea2c8" stroke-width="2.4"/>
<ellipse cx="438.4" cy="104" rx="5.4" ry="3.9" fill="#e8eef8" stroke="#8ea2c8" stroke-width="2.4"/>
<ellipse cx="428.6" cy="104" rx="6.6" ry="5" fill="none" stroke="#5870a4" stroke-width="0.6"/>
<ellipse cx="438.4" cy="104" rx="6.6" ry="5" fill="none" stroke="#5870a4" stroke-width="0.6"/>
<path d="M431.2,101.6 Q427,101.4 426.6,104 Q427,106.4 431.2,106.4" fill="none" stroke="#4c5c88" stroke-width="1"/>
<path d="M436,101.6 Q440.2,101.4 440.6,104 Q440.2,106.4 436,106.4" fill="none" stroke="#4c5c88" stroke-width="1"/>
<rect x="430.2" y="102.6" width="6.8" height="2.8" fill="#c4d4f0"/>
<line x1="430.4" y1="105" x2="436.8" y2="105" stroke="#1c2848" stroke-width="1.6"/>
</g>

<!-- colorbar -->
<g filter="url(#bl)">
<rect x="469.4" y="87" width="14" height="21.4" fill="#8c8c98"/>
<rect x="468.4" y="85.8" width="13.4" height="20.8" fill="url(#gcb)" stroke="#2c407c" stroke-width="1.5"/>
</g>
<!-- legend -->
<g filter="url(#bl)">
<rect x="499" y="87" width="21.4" height="21.4" fill="#8c8c98"/>
<rect x="497.9" y="85.8" width="20.8" height="20.8" fill="url(#gleg)" stroke="#2c407c" stroke-width="1.6"/>
<rect x="500.2" y="89.8" width="7" height="5.4" fill="#e86464"/>
<rect x="500.2" y="98.8" width="7" height="5.4" fill="#6868e4"/>
<rect x="510.6" y="90.8" width="5.8" height="1.8" fill="#181818"/>
<rect x="510.6" y="99.8" width="5.8" height="1.8" fill="#181818"/>
</g>

<!-- hide plot tools (gray) -->
<g filter="url(#bl)">
<rect x="544.8" y="91" width="14.8" height="14.6" fill="#909090"/>
<rect x="543.6" y="89.8" width="14.4" height="14.2" fill="#a6a6a6" stroke="#989898" stroke-width="0.8"/>
<rect x="543.6" y="89.8" width="14.4" height="3" fill="#989898"/>
</g>
<!-- show plot tools -->
<g filter="url(#bl)">
<rect x="574.8" y="88" width="21.6" height="20.4" fill="#70789c"/>
<rect x="573.6" y="86.8" width="21.4" height="20" fill="#2c4890" stroke="#243c84" stroke-width="0.8"/>
<rect x="574.2" y="87.6" width="20.2" height="2" fill="#4468bc"/>
<rect x="579.2" y="91" width="10.4" height="10.2" fill="#ffffff"/>
<path d="M576,91.4 V101" stroke="#ffffff" stroke-width="2.4" stroke-dasharray="2.2 0.5"/>
<path d="M592.8,91.4 V101" stroke="#ffffff" stroke-width="2.4" stroke-dasharray="2.2 0.5"/>
<rect x="574.8" y="103" width="19.2" height="2.6" fill="#c8c8bc"/>
<path d="M575,103.4 H594" stroke="#8088a8" stroke-width="0.9" stroke-dasharray="0.9 0.9"/>
</g>

<!-- window controls -->
<g stroke="#000" stroke-width="1" fill="none" shape-rendering="crispEdges">
<line x1="659" y1="22.5" x2="674" y2="22.5"/>
<rect x="728.5" y="15.5" width="14" height="14"/>
</g>
<path d="M799.5,15.5 L814,30 M814,15.5 L799.5,30" stroke="#000" stroke-width="1.1" fill="none"/>
<!-- dock arrow -->
<g>
<path d="M824.3,58.8 Q828.8,58.2 831.6,62.8" stroke="#000" stroke-width="1.9" fill="none"/>
<polygon points="834.8,60.4 834.8,66.5 828.2,66.5" fill="#000"/>
</g>

</svg>
<div id="bd"></div>
<div class="lb" style="top:61px;height:11px"></div><div class="lb" style="top:204px;height:10px"></div><div class="lb" style="top:221px;height:2px"></div><div class="lb" style="top:281px;height:2px"></div><div class="lb" style="top:411px;height:170px"></div>
</body></html>
